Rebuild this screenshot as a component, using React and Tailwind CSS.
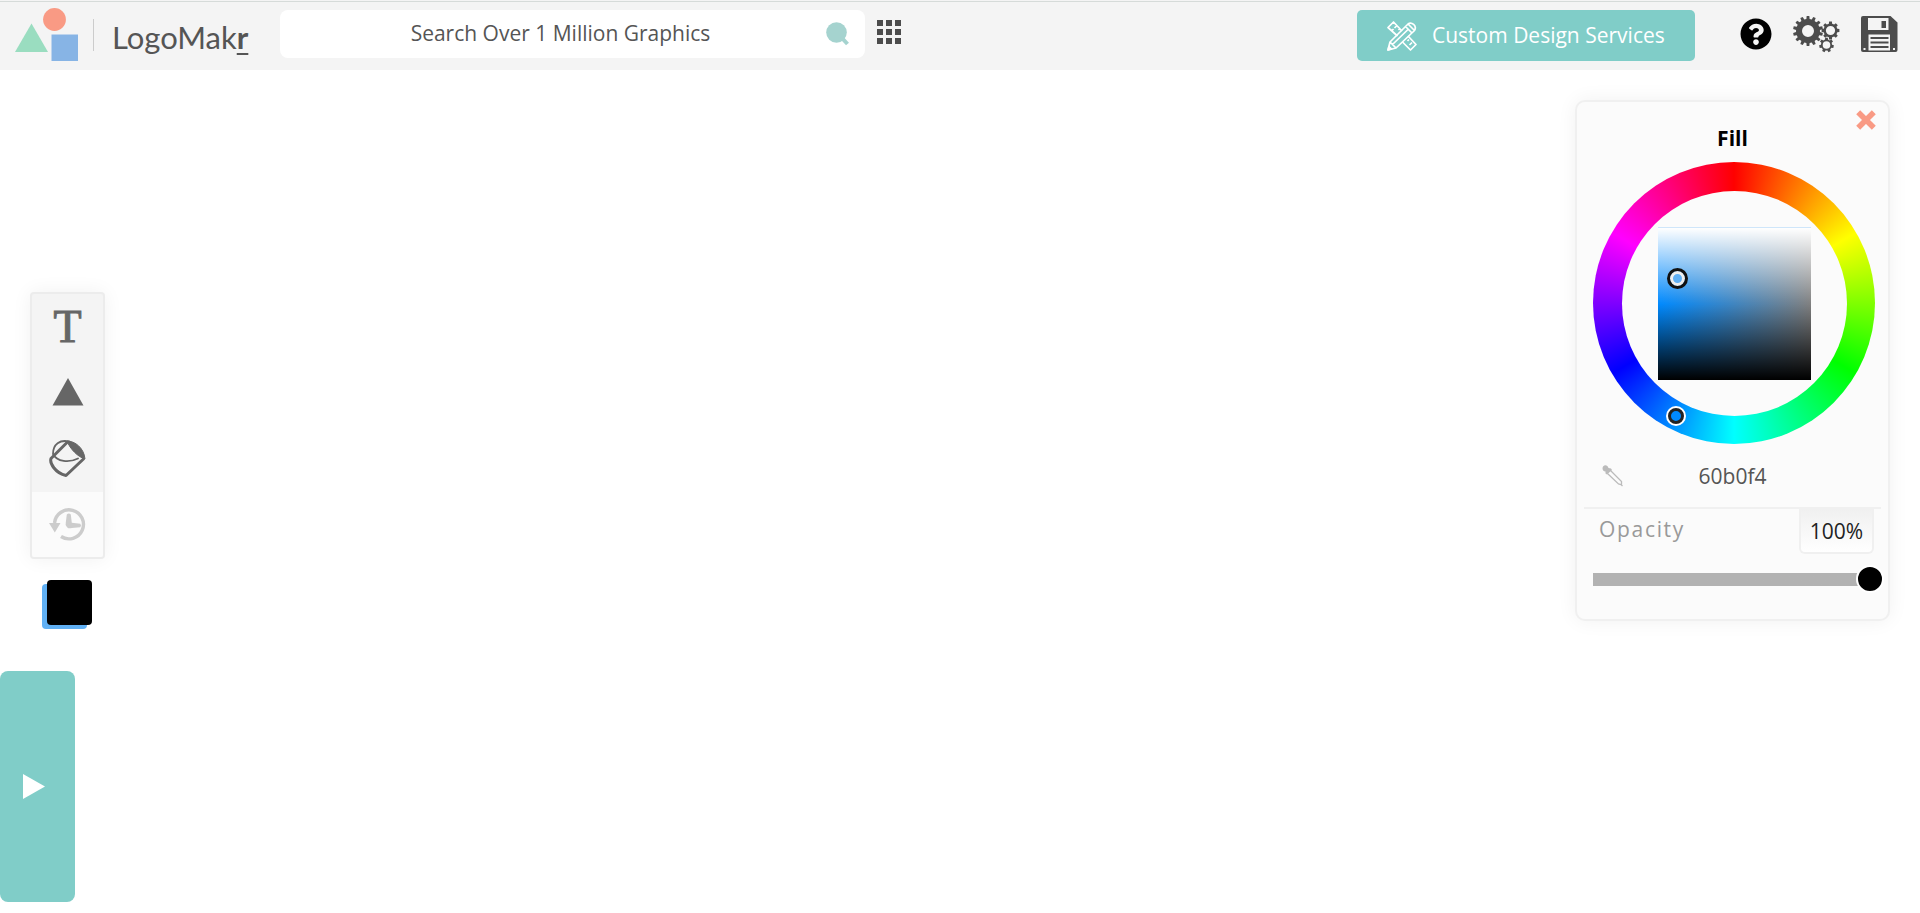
import { useState } from 'react';
import { FaQuestionCircle } from 'react-icons/fa';

function gearPath(cx, cy, outer, root, hole, teeth) {
  const step = (Math.PI * 2) / teeth;
  const at = (r, a) => `${(cx + r * Math.sin(a)).toFixed(2)} ${(cy - r * Math.cos(a)).toFixed(2)}`;
  const points = [];
  for (let i = 0; i < teeth; i++) {
    const a = i * step;
    points.push(at(root, a - step * 0.3), at(outer, a - step * 0.2), at(outer, a + step * 0.2), at(root, a + step * 0.3));
  }
  return `M${points.join('L')}Z M${cx - hole} ${cy}a${hole} ${hole} 0 1 0 ${hole * 2} 0a${hole} ${hole} 0 1 0 ${-hole * 2} 0Z`;
}

const GEARS = [
  gearPath(15, 15, 15, 12, 6, 14),
  gearPath(37.5, 14.5, 9, 7, 4.6, 8),
  gearPath(33.5, 29, 7.4, 5.6, 3.8, 7),
];

function LogoMark() {
  return (
    <svg width="64" height="54" viewBox="0 0 64 54" aria-hidden="true">
      <path d="M16.5 15.5 33 44H0Z" fill="#9addc0" />
      <circle cx="39.5" cy="11.5" r="11.4" fill="#f99a84" />
      <rect x="36.5" y="26.5" width="26.5" height="26.5" fill="#87b4e5" />
    </svg>
  );
}

function DesignIcon() {
  return (
    <svg width="30" height="30" viewBox="0 0 30 30" fill="none" stroke="#fff" strokeWidth="1.7" strokeLinejoin="round" aria-hidden="true">
      <path d="M10.5 15 1 6.5 6.5 1 15 10M15.5 21l8 8 5.500-5.500-8-8.500M10 4.500 7.500 7M13 7.500 11.500 9M5 9.500 6.500 8M22 18.500l-1.500 1.500M25 21.500l-2.500 2.500" />
      <path d="M1 29l2-8L20.500 3.500c3-4 11 1.500 6.500 6.500L9 27ZM3 21l6 6M18.500 5.500l6 6M21 3l6.500 6.500M5.500 23.500 21.500 8" />
      <path d="M1 29l1-3.500L4.500 28Z" fill="#fff" />
    </svg>
  );
}

function GearsIcon() {
  return (
    <svg width="47" height="37" viewBox="0 0 47 37" fill="#4c4c4c" fillRule="evenodd" aria-hidden="true">
      {GEARS.map((d) => <path key={d} d={d} />)}
    </svg>
  );
}

function SaveIcon() {
  return (
    <svg width="37" height="36" viewBox="0 0 37 36" aria-hidden="true">
      <path d="M2 0H29.500L36.500 6.500V34a2 2 0 0 1-2 2H2a2 2 0 0 1-2-2V2A2 2 0 0 1 2 0Z" fill="#4c4c4c" />
      <path d="M7 2H27.500V14H7ZM7.500 18.500H29V34.500H7.500ZM2.500 32h2v2h-2ZM32 32h2v2h-2Z" fill="#f4f4f4" />
      <path d="M20.500 5h4.500v7h-4.500ZM9.500 21h18v2h-18ZM9.500 25.500h18v2h-18ZM9.500 30h18v2h-18Z" fill="#4c4c4c" />
    </svg>
  );
}

function TriangleIcon() {
  return (
    <svg width="32" height="30" viewBox="0 0 32 30" aria-hidden="true">
      <path d="M16 0 31.500 27.500H.500Z" fill="#666" />
    </svg>
  );
}

function BucketIcon() {
  return (
    <svg width="37" height="39" viewBox="0 0 37 39" fill="none" stroke="#666" aria-hidden="true">
      <path d="M18.500 2 2 18.500C.500 23 6 33 17 35.500L35 18.500" strokeWidth="3" strokeLinejoin="round" />
      <path d="M18 1C26 1 35 8 36 19 29 17 21 9 18 1Z" fill="#666" strokeWidth="1" />
      <path d="M20 1.500C11-.500 4 4 4 14c4 8 16 9 25 4.500" strokeWidth="1.800" strokeLinecap="round" />
    </svg>
  );
}

function HistoryIcon() {
  return (
    <svg width="37" height="33" viewBox="0 0 37 33" fill="none" stroke="#ccc" aria-hidden="true">
      <path d="M5.500 15a14.500 14.500 0 1 1 6.500 13.500" strokeWidth="3.400" />
      <path d="M0 15H11.500L5.800 24.500Z" fill="#ccc" stroke="none" />
      <path d="M17.800 6.500q2-2 4 0l1 8.300 8.500 1q1.500 1.700 0 3.400l-8.500.700a4.400 4.400 0 0 1-6-5.400Z" fill="#ccc" stroke="none" />
    </svg>
  );
}

function EyedropperIcon() {
  return (
    <svg width="22" height="22" viewBox="0 0 22 22" fill="none" stroke="#bbb" strokeWidth="1.300" aria-hidden="true">
      <path d="M5.500 8.500 16.500 19l2.500.500 1.500 1.500M8.500 5.500 19.500 16.500v3" />
      <path d="M1 1.500C3-.500 5.500 0 6.500 3L9 3.500 10 5 5 9.500 3.500 8.500 3.500 6.500C.500 6 0 3.500 1 1.500Z" fill="#bbb" stroke="none" />
    </svg>
  );
}

const TOOLS = [
  { name: 'Text', icon: <span className="font-['Liberation_Serif',serif] text-[46px] leading-none text-[#666] [-webkit-text-stroke:1px_#666]">T</span> },
  { name: 'Shapes', icon: <TriangleIcon /> },
  { name: 'Fill', icon: <BucketIcon /> },
];

function Header() {
  return (
    <div className="bg-[#f4f4f4] pt-px">
      <header className="flex h-[69px] items-start border-t border-[#d6dbd9] pl-[15px] pr-[22px] pt-[6px]">
        <a href="#" className="flex h-[54px] w-[265px] shrink-0 items-center text-[#555]">
          <LogoMark />
          <span className="ml-3.5 h-8 w-px bg-[#ccc]" />
          <span className="ml-[18px] pt-1 font-['Lato',sans-serif] text-[31px] leading-9">
            LogoMak<span className="font-bold underline decoration-2 underline-offset-4">r</span>
          </span>
        </a>
        <form className="mt-0.5 flex h-12 w-[585px] items-center rounded-lg bg-white px-[15px]">
          <input
            type="text"
            aria-label="Search graphics"
            placeholder="Search Over 1 Million Graphics"
            className="h-full min-w-0 flex-1 bg-transparent pb-0.5 text-center text-[21px] text-[#555] outline-none placeholder:text-[#555]"
          />
          <button type="button" aria-label="Search">
            <svg width="24" height="24" viewBox="0 0 24 24" aria-hidden="true">
              <circle cx="10.500" cy="10.500" r="10.300" fill="#a5d3cf" />
              <path d="m15 15 6.500 7" stroke="#a5d3cf" strokeWidth="4" />
            </svg>
          </button>
        </form>
        <button type="button" aria-label="Browse categories" className="ml-3 mt-3 grid grid-cols-3 gap-[3px]">
          {Array.from({ length: 9 }, (_, i) => <span key={i} className="size-1.5 bg-[#4c4c4c]" />)}
        </button>
        <a href="#" className="ml-auto mt-0.5 flex h-[51px] w-[338px] items-center rounded-[5px] bg-[#80cdc8] pl-[30px] text-[21px] text-white">
          <DesignIcon />
          <span className="ml-[15px]">Custom Design Services</span>
        </a>
        <div className="ml-[45px] flex h-[52px] items-center gap-[21px]">
          <button type="button" aria-label="Help"><FaQuestionCircle className="size-8 text-black" /></button>
          <button type="button" aria-label="Settings"><GearsIcon /></button>
          <button type="button" aria-label="Save"><SaveIcon /></button>
        </div>
      </header>
    </div>
  );
}

function Toolbar() {
  return (
    <aside className="flex flex-col items-start pt-[222px]">
      <div className="ml-[30px] w-[75px] overflow-hidden rounded border-2 border-[#ececec] bg-[#f4f4f4] shadow-[0_0_20px_rgba(0,0,0,0.06)]">
        {TOOLS.map((tool) => (
          <button key={tool.name} type="button" aria-label={tool.name} className="flex h-[66px] w-full items-center justify-center">
            {tool.icon}
          </button>
        ))}
        <button type="button" aria-label="History" className="flex h-[65px] w-full items-center justify-center bg-[#fbfbfb]">
          <HistoryIcon />
        </button>
      </div>
      <button type="button" aria-label="Colors" className="relative ml-[42px] mt-[21px] h-[49px] w-[50px]">
        <span className="absolute bottom-0 left-0 size-[45px] rounded bg-[#60b0f4]" />
        <span className="absolute right-0 top-0 size-[45px] rounded bg-black" />
      </button>
      <button type="button" aria-label="Open drawer" className="mt-[42px] flex h-[231px] w-[75px] items-center rounded-lg bg-[#80cdc8] pl-[23px]">
        <svg width="22" height="25" viewBox="0 0 22 25" aria-hidden="true"><path d="M0 0 22 12.500 0 25Z" fill="#fff" /></svg>
      </button>
    </aside>
  );
}

function ColorWheel() {
  return (
    <div className="relative ml-4 mt-2.5 flex size-[282px] items-center justify-center rounded-full bg-[conic-gradient(#f00,#ff0,#0f0,#0ff,#00f,#f0f,#f00)]">
      <div className="flex size-[225px] items-center justify-center rounded-full bg-[#fbfbfb]">
        <div className="size-[153px] border-t border-[#cfe6fa] bg-[linear-gradient(to_bottom,#fff,rgba(255,255,255,0)_50%,rgba(0,0,0,0)_50%,#000),linear-gradient(to_right,#008aff,#808080)]" />
      </div>
      {/* saturation / lightness marker */}
      <span className="absolute left-[74px] top-[106px] size-[21px] rounded-full border-[3px] border-[#111] bg-[#60b0f4] ring-inset ring-[3px] ring-[#eee]" />
      {/* hue marker */}
      <span className="absolute left-[73px] top-[244px] flex size-5 items-center justify-center rounded-full bg-white">
        <span className="size-4 rounded-full border-[3px] border-[#222] bg-[#008aff]" />
      </span>
    </div>
  );
}

function FillPanel() {
  const [opacity, setOpacity] = useState(100);

  return (
    <section className="relative mr-[30px] mt-[30px] w-[315px] rounded-[10px] border-2 border-[#f0f0f0] bg-[#fbfbfb] pb-[26px] pt-[22px] shadow-[0_0_20px_rgba(0,0,0,0.06)]">
      <button type="button" aria-label="Close" className="absolute right-3 top-2">
        <svg width="20" height="20" viewBox="0 0 20 20" aria-hidden="true">
          <path d="m2.200 2.200 15.600 15.600m0-15.600L2.200 17.800" stroke="#f99a84" strokeWidth="5.600" />
        </svg>
      </button>
      <h2 className="text-center text-[21px] font-bold leading-7 text-black">Fill</h2>
      <ColorWheel />
      <div className="mt-[18px] grid grid-cols-3 items-center px-[25px]">
        <button type="button" aria-label="Pick a color" className="justify-self-start"><EyedropperIcon /></button>
        <input type="text" aria-label="Hex color" defaultValue="60b0f4" className="w-full bg-transparent text-center text-[21px] leading-7 text-[#555] outline-none" />
      </div>
      <div className="mx-[7px] mt-[17px] flex items-start justify-between border-t-2 border-[#f0f0f0] pl-[15px] pr-[7px]">
        <label htmlFor="opacity" className="mt-1.5 text-[21px] leading-7 tracking-[0.08em] text-[#999]">Opacity</label>
        <input
          type="text"
          aria-label="Opacity value"
          value={`${opacity}%`}
          readOnly
          className="h-[45px] w-[75px] rounded-b-md border-2 border-t-0 border-[#f0f0f0] bg-linear-to-b from-[#f0f0f0] to-white text-center text-[21px] text-[#222] outline-none"
        />
      </div>
      <input
        id="opacity"
        type="range"
        min="0"
        max="100"
        value={opacity}
        onChange={(e) => setOpacity(Number(e.target.value))}
        className="ml-4 mt-[11px] block h-7 w-[291px] appearance-none bg-transparent [&::-webkit-slider-runnable-track]:h-[13px] [&::-webkit-slider-runnable-track]:bg-linear-to-r [&::-webkit-slider-runnable-track]:from-[#b2b2b2] [&::-webkit-slider-runnable-track]:from-95% [&::-webkit-slider-runnable-track]:to-transparent [&::-webkit-slider-runnable-track]:to-95% [&::-webkit-slider-thumb]:-mt-2 [&::-webkit-slider-thumb]:size-7 [&::-webkit-slider-thumb]:appearance-none [&::-webkit-slider-thumb]:rounded-full [&::-webkit-slider-thumb]:border-2 [&::-webkit-slider-thumb]:border-white [&::-webkit-slider-thumb]:bg-black"
      />
    </section>
  );
}

export default function App() {
  return (
    <div className="min-h-screen bg-white font-['Open_Sans',sans-serif]">
      <Header />
      <main className="flex items-start justify-between">
        <Toolbar />
        <FillPanel />
      </main>
    </div>
  );
}
